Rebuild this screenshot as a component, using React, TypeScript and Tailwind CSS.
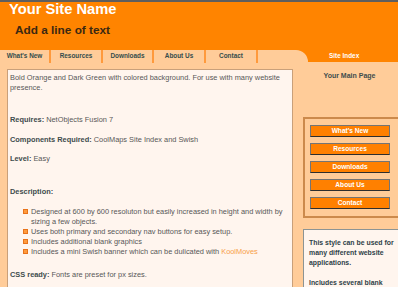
import React from 'react';

const navTabs = [
  { label: "What's New", width: 'w-[49px]' },
  { label: 'Resources', width: 'w-[50px]' },
  { label: 'Downloads', width: 'w-[49px]' },
  { label: 'About Us', width: 'w-[50px]' },
  { label: 'Contact', width: 'w-[50px]' },
];

const sideButtons = ["What's New", 'Resources', 'Downloads', 'About Us', 'Contact'];

const Bullet: React.FC<{ children: React.ReactNode }> = ({ children }) => (
  <li className="flex items-start ml-[13px]">
    <span className="mt-[2px] mr-[3px] w-[5px] h-[5px] shrink-0 bg-[#ff9a3c] border border-[#e8731a]" />
    <span>{children}</span>
  </li>
);

export default function App() {
  return (
    <div className="w-[398px] h-[287px] overflow-hidden bg-[#ffcc99] font-['Liberation_Sans',Arial,sans-serif]">
      {/* Top strip + header */}
      <div className="h-[2px] bg-[#5e5e5e]" />
      <div className="h-[48px] bg-[#ff8400] pl-[9px]">
        <h1 className="text-[14.7px] leading-[15px] font-bold text-white">Your Site Name</h1>
        <p className="mt-[7px] ml-[6px] text-[11.8px] leading-[12px] font-bold text-[#3a2812]">Add a line of text</p>
      </div>

      {/* Nav row */}
      <div className="flex h-[12px] bg-[#ff8400]">
        <div className="flex w-[308px] h-full bg-[#ffcc99] rounded-tr-[13px]">
          {navTabs.map((tab) => (
            <React.Fragment key={tab.label}>
              <div className={`${tab.width} h-full flex items-center justify-center text-[6.4px] font-bold text-[#344c4c]`}>
                {tab.label}
              </div>
              <div className="w-[2px] h-[13px] bg-[#ff9a3c]" />
            </React.Fragment>
          ))}
        </div>
        <div className="flex-1 flex items-center pl-[21px] text-[6.4px] font-bold text-white">Site Index</div>
      </div>

      {/* Body */}
      <div className="flex">
        {/* Main column */}
        <div className="w-[293px] shrink-0 pl-[7px] pt-[7px]">
          <div className="h-[230px] bg-[#fff5ee] border border-[#c9a07a] pl-[2px] pt-[3px] text-[7.4px] leading-[10px] text-[#575757] whitespace-nowrap">
            <p>
              Bold Orange and Dark Green with colored background. For use with many website
              <br />
              presence.
            </p>
            <p className="mt-[22px]">
              <b className="text-[#3e4c4c]">Requires:</b> NetObjects Fusion 7
            </p>
            <p className="mt-[10px]">
              <b className="text-[#3e4c4c]">Components Required:</b> CoolMaps Site Index and Swish
            </p>
            <p className="mt-[9px]">
              <b className="text-[#3e4c4c]">Level:</b> Easy
            </p>
            <p className="mt-[23px] font-bold text-[#3e4c4c]">Description:</p>
            <ul className="mt-[10px]">
              <Bullet>
                Designed at 600 by 600 resoluton but easily increased in height and width by
                <br />
                sizing a few objects.
              </Bullet>
              <Bullet>Uses both primary and secondary nav buttons for easy setup.</Bullet>
              <Bullet>Includes additional blank graphics</Bullet>
              <Bullet>
                Includes a mini Swish banner which can be dulicated with{' '}
                <span className="text-[#f7a048]">KoolMoves</span>
              </Bullet>
            </ul>
            <p className="mt-[13px]">
              <b className="text-[#3e4c4c]">CSS ready:</b> Fonts are preset for px sizes.
            </p>
          </div>
        </div>

        {/* Sidebar */}
        <div className="flex-1 min-w-0">
          <p className="pt-[9px] pl-[8px] text-center text-[7px] leading-[9px] font-bold text-[#3e4c4c]">Your Main Page</p>

          <div className="mt-[37px] ml-[10px] w-[100px] border-2 border-[#cc8a4c] pl-[5px] pt-[6px] pb-[7px] flex flex-col gap-[6px]">
            {sideButtons.map((label) => (
              <div
                key={label}
                className="w-[80px] h-[12px] flex items-center justify-center bg-[#ff8000] border border-[#747474] border-b-[#2e2e2e] text-[6.6px] font-bold text-white"
              >
                {label}
              </div>
            ))}
          </div>

          <div className="mt-[11px] ml-[10px] w-[100px] h-[80px] bg-[#fff5ee] border border-[#8c9494] pl-[5px] pt-[8px] text-[6.9px] leading-[10px] font-bold text-[#2e3f48] whitespace-nowrap">
            <p>
              This style can be used for
              <br />
              many different website
              <br />
              applications.
            </p>
            <p className="mt-[10px]">Includes several blank</p>
          </div>
        </div>
      </div>
    </div>
  );
}
